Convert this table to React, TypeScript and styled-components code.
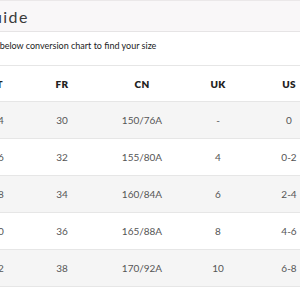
import styled, { createGlobalStyle } from 'styled-components';

type TSize = {
    it: string,
    fr: string,
    cn: string,
    uk: string,
    us: string,
}

const sizes: TSize[] = [
    { it: "34", fr: "30", cn: "150/76A", uk: "-", us: "0" },
    { it: "36", fr: "32", cn: "155/80A", uk: "4", us: "0-2" },
    { it: "38", fr: "34", cn: "160/84A", uk: "6", us: "2-4" },
    { it: "40", fr: "36", cn: "165/88A", uk: "8", us: "4-6" },
    { it: "42", fr: "38", cn: "170/92A", uk: "10", us: "6-8" },
];

const columns = [
    { key: "it", label: "IT", width: 68 },
    { key: "fr", label: "FR", width: 60 },
    { key: "cn", label: "CN", width: 100 },
    { key: "uk", label: "UK", width: 52 },
    { key: "us", label: "US", width: 90 },
] as const;

const GlobalStyle = createGlobalStyle`
    html, body {
        margin: 0;
        background: #fff;
        overflow: hidden;
    }

    body {
        font-family: Lato, "Liberation Sans", sans-serif;
    }
`

const SizeGuide = () => {
    return (
        <>
            <GlobalStyle />
            <StyledModal>
                <ModalHeader>
                    <h2 className="modal__title">Size Guide</h2>
                </ModalHeader>
                <ModalBody>
                    <p className="modal__intro">Use the below conversion chart to find your size</p>
                    <SizeTable>
                        <colgroup>
                            {columns.map(col => <col key={col.key} style={{ width: col.width }} />)}
                        </colgroup>
                        <thead>
                            <tr>
                                {columns.map(col => <th key={col.key}>{col.label}</th>)}
                            </tr>
                        </thead>
                        <tbody>
                            {sizes.map(size => (
                                <tr key={size.it}>
                                    {columns.map(col => <td key={col.key}>{size[col.key]}</td>)}
                                </tr>
                            ))}
                        </tbody>
                    </SizeTable>
                </ModalBody>
            </StyledModal>
        </>
    );
};

const StyledModal = styled.div`
    width: 418px;
    margin-left: -60px;
    background: #fff;
`

const ModalHeader = styled.div`
    display: flex;
    align-items: center;
    height: 30px;
    padding: 0 0 0 1px;
    background: #f9f7f8;
    border-top: 1px solid #ebe8e9;
    border-bottom: 1px solid #e6e4e5;

    .modal__title {
        margin: 0;
        font-size: 16px;
        font-weight: 400;
        letter-spacing: 1.4px;
        color: #3a3a3a;
    }
`

const ModalBody = styled.div`
    padding: 0 24px;

    .modal__intro {
        margin: 0;
        padding: 8px 0 0;
        height: 25px;
        font-size: 9px;
        font-weight: 400;
        color: #222;
        text-indent: 3px;
    }
`

const SizeTable = styled.table`
    width: 370px;
    table-layout: fixed;
    border-collapse: collapse;
    border-top: 1px solid #e6e6e6;

    th, td {
        padding: 0;
        text-align: center;
        border-bottom: 1px solid #e6e6e6;
    }

    th {
        height: 35px;
        font-size: 10px;
        font-weight: 800;
        color: #222;
        letter-spacing: 0.3px;
    }

    td {
        height: 36px;
        font-size: 10px;
        color: #555;
    }

    tbody tr:nth-child(odd) {
        background: #f5f5f5;
    }
`

export default SizeGuide;
